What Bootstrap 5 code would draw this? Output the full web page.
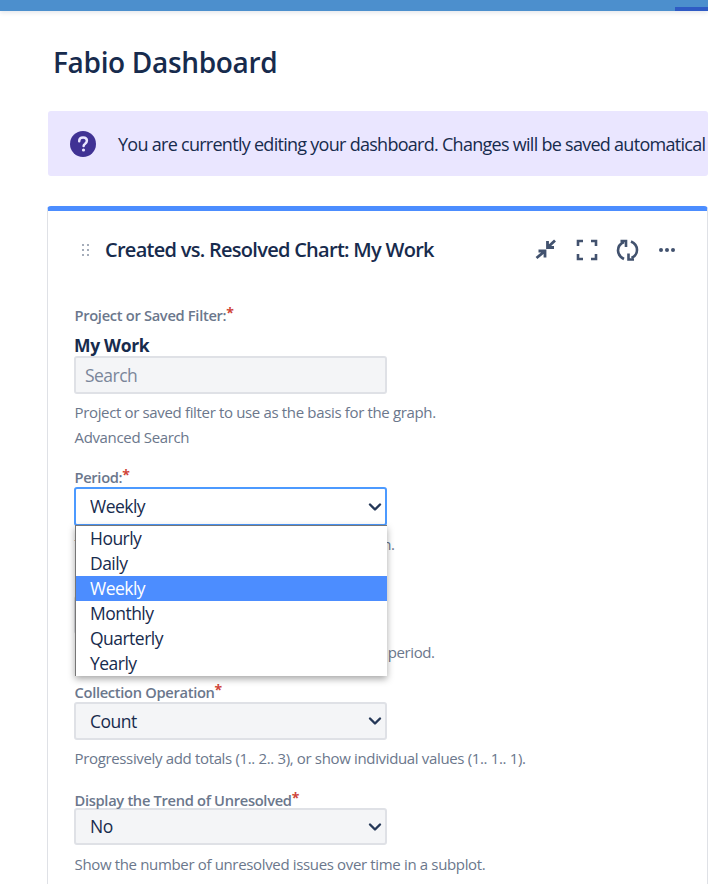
<!DOCTYPE html>
<html lang="en">
<head>
  <meta charset="UTF-8" />
  <meta name="viewport" content="width=device-width, initial-scale=1" />
  <title>Fabio Dashboard</title>
  <link href="https://cdn.jsdelivr.net/npm/bootstrap@5.3.0/dist/css/bootstrap.min.css" rel="stylesheet" />
  <style>
    html, body { height: 884px; overflow: hidden; }
    body { font-family: "Open Sans", "Noto Sans", sans-serif; color: #172b4d; background: #fff; letter-spacing: -.02em; }
    .top-strip { height: 11px; background: #4c8fcd; box-shadow: 0 2px 4px rgba(9,30,66,.1); }
    .top-tab { width: 33px; height: 4px; margin-top: 7px; background: #2f5bc4; }
    .page-wrap { padding: 0 0 0 47px; overflow: hidden; }
    .dash-title { margin: 31px 0 29px 6px; font-size: 28px; line-height: 40px; font-weight: 600; color: #172b4d; }
    .edit-note { height: 65px; margin-left: 1px; padding-left: 22px; gap: 22px; background: #eae6ff; border-radius: 3px; font-size: 18px; letter-spacing: -.04em; white-space: nowrap; overflow: hidden; }
    .edit-note span { padding-top: 2px; }
    .gadget { margin-top: 30px; width: 661px; height: 700px; border: 1px solid #dfe1e6; border-top: 5px solid #4c8dff; border-radius: 4px; }
    .gadget-head { height: 78px; padding: 0 31px 0 33px; }
    .gadget-head h2 { margin: 0 0 0 14px; font-size: 20px; font-weight: 600; letter-spacing: -.036em; color: #172b4d; }
    .head-icons { gap: 18px; }
    .gadget-body { padding: 17px 0 0 26px; }
    .fld-label { display: block; margin: 0; padding-left: .5px; font-size: 14.7px; line-height: 18px; font-weight: 600; color: #6b778c; }
    .fld-gap { margin-top: 21px; }
    .fld-gap-lg { margin-top: 24px; }
    .fld-gap-end { margin-top: 23px; }
    .req { color: #d0453a; font-size: 14px; font-weight: 700; line-height: 1; vertical-align: 3px; }
    .picked { font-size: 17.5px; line-height: 22px; font-weight: 700; color: #172b4d; margin-top: 10px; }
    .fld-input.form-control, .fld-input.form-select { width: 313px; height: 38px; margin-top: 1px; border: 2px solid #dfe1e6; border-radius: 3px; background-color: #f4f5f7; color: #172b4d; font-size: 17.5px; letter-spacing: -.03em; padding: 0 0 0 14px; box-shadow: none; }
    .fld-input.form-control { padding-left: 9px; margin-top: 0; }
    .fld-input.form-control::placeholder { color: #7a869a; opacity: 1; }
    .form-select.fld-input { --bs-form-select-bg-img: url("data:image/svg+xml,%3csvg xmlns='http://www.w3.org/2000/svg' viewBox='0 0 16 16'%3e%3cpath fill='none' stroke='%23253858' stroke-linecap='round' stroke-linejoin='round' stroke-width='2.4' d='M3 5.5l5 5 5-5'/%3e%3c/svg%3e"); background-position: right 2px center; background-size: 16px 16px; }
    .fld-input.is-open { height: 39px; background-color: #fff; border-color: #4c9aff; }
    .form-select.fld-input.sel-short { height: 37px; margin-top: -1px; }
    .fld-help { padding-left: .5px; font-size: 15px; letter-spacing: -.023em; line-height: 20px; color: #6b778c; margin-top: 8px; }
    .fld-help.help-near { margin-top: 5px; }
    .fld-help.help-wide { margin-top: 9px; }
    .fld-help.help-tight { letter-spacing: -.027em; }
    .period-wrap { position: relative; margin-top: 1px; }
    .period-wrap .fld-input { margin-top: 0; }
    .opt-menu { position: absolute; left: 1px; top: 38px; width: 312px; background: #fff; border: 1px solid #767676; border-right: 0; border-bottom: 0; box-shadow: 0 3px 7px rgba(0,0,0,.35); font-size: 17.5px; letter-spacing: -.03em; z-index: 5; }
    .opt-menu li { height: 25px; line-height: 25px; padding-left: 14px; color: #172b4d; }
    .opt-menu li.opt-on { background: #4c8dff; color: #fff; }
  </style>
</head>
<body>
  <div class="top-strip d-flex justify-content-end"><div class="top-tab"></div></div>

  <div class="page-wrap">
    <h1 class="dash-title">Fabio Dashboard</h1>

    <div class="edit-note d-flex align-items-center">
      <svg class="flex-shrink-0" width="26" height="26" viewBox="0 0 26 26"><circle cx="13" cy="13" r="13" fill="#403294"/><path d="M9.2 10.2c0-2.3 1.7-3.7 3.9-3.7s3.8 1.3 3.8 3.3c0 1.6-.9 2.4-2 3.2-.9.6-1.3 1-1.3 2" fill="none" stroke="#eae6ff" stroke-width="2.5" stroke-linecap="round"/><circle cx="13.5" cy="19" r="1.6" fill="#eae6ff"/></svg>
      <span>You are currently editing your dashboard. Changes will be saved automatical</span>
    </div>

    <div class="gadget">
      <div class="gadget-head d-flex align-items-center">
        <svg class="flex-shrink-0" width="10" height="14" viewBox="0 0 10 14" fill="#a5adba"><rect x="1" y="1" width="2" height="2"/><rect x="6" y="1" width="2" height="2"/><rect x="1" y="6" width="2" height="2"/><rect x="6" y="6" width="2" height="2"/><rect x="1" y="11" width="2" height="2"/><rect x="6" y="11" width="2" height="2"/></svg>
        <h2>Created vs. Resolved Chart: My Work</h2>
        <div class="head-icons d-flex align-items-center ms-auto">
          <svg width="24" height="24" viewBox="0 0 24 24" fill="none" stroke="#42526e" stroke-width="2.8"><path d="M21 2.5L13.5 9.5M13.5 3v6.5H20"/><path d="M2.5 20L11 13M4.5 13H11v6.5"/></svg>
          <svg width="22" height="24" viewBox="0 0 22 24" fill="none" stroke="#42526e" stroke-width="2.6"><path d="M2 8V3h5M15 3h5v5M20 16v5h-5M7 21H2v-5"/></svg>
          <svg width="24" height="24" viewBox="0 0 24 24" fill="none" stroke="#42526e" stroke-width="2.6"><path d="M8 21C4 19 2 15.5 2 12.5 2 8.5 4.5 5.5 8 4"/><path d="M4.5 3H10v6"/><path d="M15 3.5c3.5 1.500 6 4.500 6 8.500 0 3.500-2.200 6.500-5.500 8"/><path d="M18 21.500h-5.500v-6"/></svg>
          <svg width="18" height="24" viewBox="0 0 18 24" fill="#42526e"><circle cx="3" cy="12" r="2"/><circle cx="9" cy="12" r="2"/><circle cx="15" cy="12" r="2"/></svg>
        </div>
      </div>

      <div class="gadget-body">
        <label class="fld-label">Project or Saved Filter:<span class="req">*</span></label>
        <div class="picked">My Work</div>
        <input class="form-control fld-input" type="text" placeholder="Search" />
        <div class="fld-help">Project or saved filter to use as the basis for the graph.</div>
        <div class="fld-help help-near">Advanced Search</div>

        <label class="fld-label fld-gap">Period:<span class="req">*</span></label>
        <div class="period-wrap">
          <select class="form-select fld-input is-open"><option>Weekly</option></select>
          <ul class="opt-menu list-unstyled mb-0">
            <li>Hourly</li>
            <li>Daily</li>
            <li class="opt-on">Weekly</li>
            <li>Monthly</li>
            <li>Quarterly</li>
            <li>Yearly</li>
          </ul>
        </div>
        <div class="fld-help">The length of periods represented on the graph.</div>

        <label class="fld-label fld-gap-lg">Days Previously:<span class="req">*</span></label>
        <input class="form-control fld-input" type="text" value="30" />
        <div class="fld-help help-tight">Days (including today) to show in the graph per period.</div>

        <label class="fld-label fld-gap">Collection Operation<span class="req">*</span></label>
        <select class="form-select fld-input"><option>Count</option></select>
        <div class="fld-help">Progressively add totals (1.. 2.. 3), or show individual values (1.. 1.. 1).</div>

        <label class="fld-label fld-gap-end">Display the Trend of Unresolved<span class="req">*</span></label>
        <select class="form-select fld-input sel-short"><option>No</option></select>
        <div class="fld-help help-wide">Show the number of unresolved issues over time in a subplot.</div>
      </div>
    </div>
  </div>
<script src="https://cdn.jsdelivr.net/npm/bootstrap@5.3.0/dist/js/bootstrap.bundle.min.js"></script>
</body>
</html>
